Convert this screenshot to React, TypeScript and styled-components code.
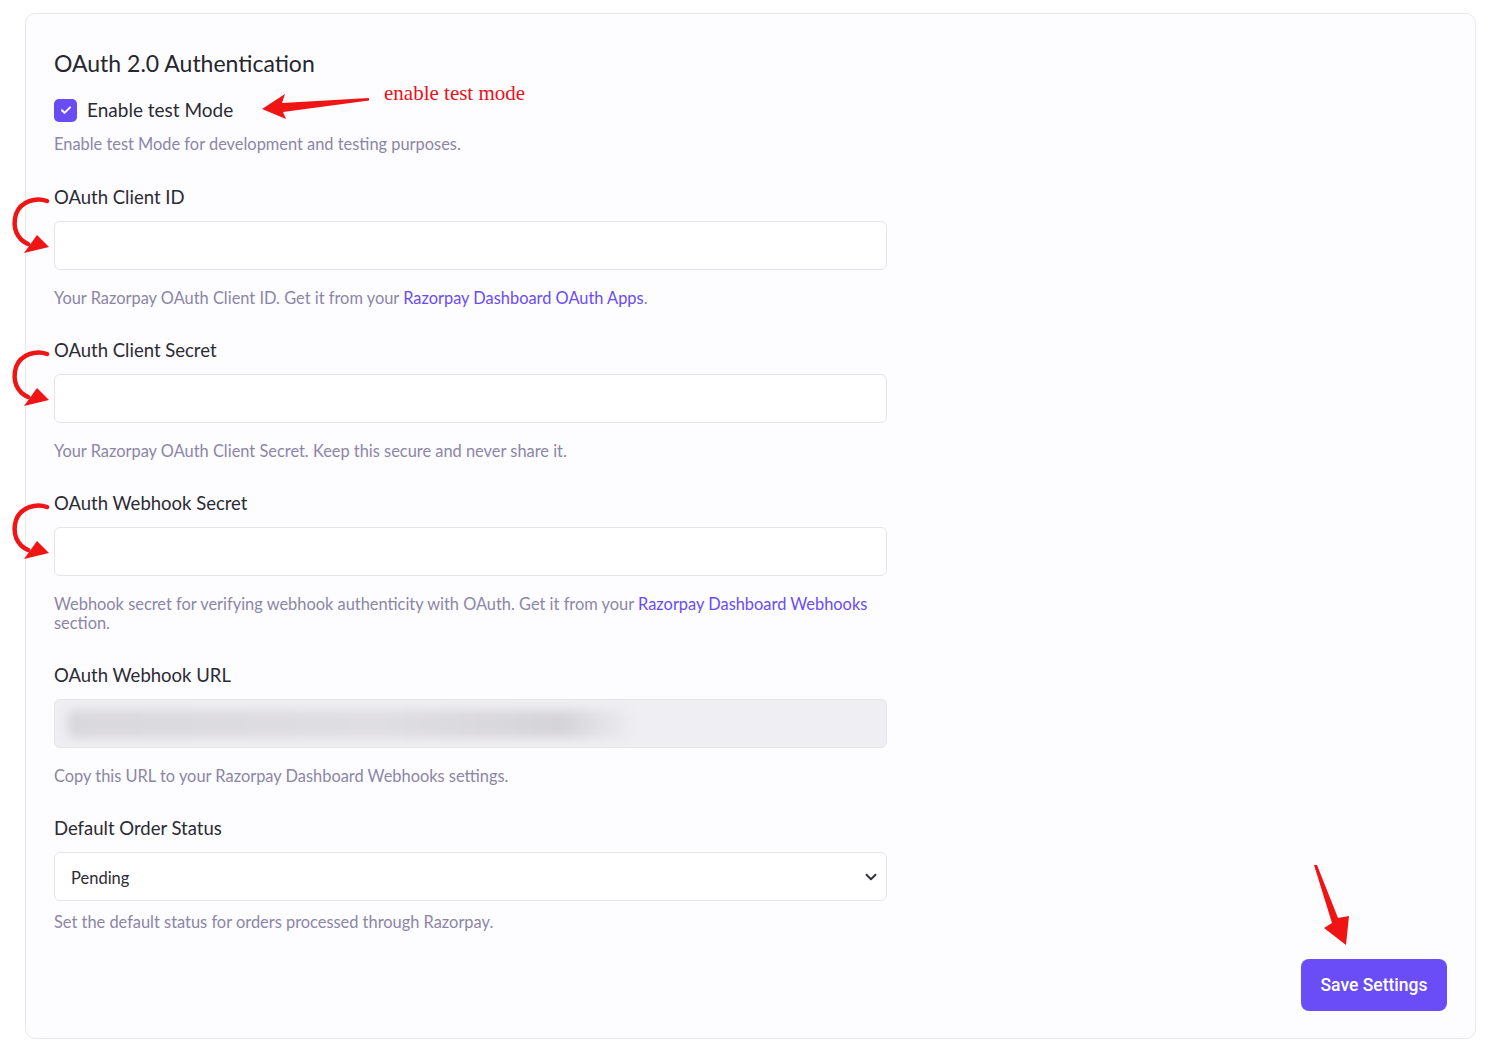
import React, { useState } from 'react';
import styled, { createGlobalStyle } from 'styled-components';

const GlobalStyle = createGlobalStyle`
  * {
    box-sizing: border-box;
  }
  body {
    margin: 0;
    background: #fff;
    font-family: Lato, 'Noto Sans', sans-serif;
    color: #2b2b33;
  }
`;

const Page = styled.div`
  position: relative;
  padding: 13px 22px 11px 25px;
`;

const Card = styled.form`
  background: #fdfcff;
  border: 1px solid #e9e8ee;
  border-radius: 10px;
  padding: 34px 28px 27px 28px;
  min-height: 1026px;
  display: flex;
  flex-direction: column;
`;

const Title = styled.h2`
  margin: 0 0 19px;
  font-size: 23px;
  font-weight: 400;
  line-height: 30px;
  color: #26262e;
`;

const CheckRow = styled.label`
  display: flex;
  align-items: center;
  gap: 10px;
  font-size: 19px;
  line-height: 26px;
  color: #2b2b33;
  cursor: pointer;
`;

const Box = styled.span<{ $on: boolean }>`
  width: 23px;
  height: 23px;
  border-radius: 5px;
  background: ${(p) => (p.$on ? '#6a4cf5' : '#fff')};
  border: ${(p) => (p.$on ? 'none' : '1px solid #c9c6d6')};
  display: flex;
  align-items: center;
  justify-content: center;
`;

const Fields = styled.div`
  width: 833px;
  display: flex;
  flex-direction: column;
`;

const Field = styled.div<{ $gap?: number }>`
  display: flex;
  flex-direction: column;
  margin-top: ${(p) => p.$gap ?? 31}px;
`;

const Label = styled.label`
  font-size: 18.5px;
  line-height: 24px;
  color: #2b2b33;
  margin-bottom: 12px;
`;

const Input = styled.input`
  height: 49px;
  width: 100%;
  border: 1px solid #e5e4ea;
  border-radius: 6px;
  background: #fff;
  padding: 0 16px;
  font: inherit;
  font-size: 16px;
  outline: none;
`;

const ReadOnly = styled.div`
  height: 49px;
  border: 1px solid #e5e4ea;
  border-radius: 6px;
  background: #efeef2;
  display: flex;
  align-items: center;
  padding: 0 12px;
  overflow: hidden;
`;

const Smudge = styled.div`
  width: 562px;
  height: 28px;
  border-radius: 8px;
  background: linear-gradient(90deg, #d9d8dc 0%, #dfdee2 55%, #d5d4d8 88%, #ecebef 100%);
  filter: blur(5px);
`;

const SelectWrap = styled.div`
  height: 49px;
  border: 1px solid #e5e4ea;
  border-radius: 6px;
  background: #fff;
  display: flex;
  align-items: center;
  justify-content: space-between;
  padding: 3px 6px 0 16px;
  font-size: 16.5px;
  color: #2b2b33;

  svg {
    margin-top: -3px;
  }
`;

const Help = styled.p<{ $top?: number }>`
  margin: ${(p) => p.$top ?? 18}px 0 0;
  font-size: 16.4px;
  line-height: 19px;
  color: #8b86a6;
`;

const Link = styled.a`
  color: #6a4cf5;
  text-decoration: none;
`;

const Footer = styled.div`
  margin-top: auto;
  display: flex;
  justify-content: flex-end;
`;

const SaveButton = styled.button`
  width: 146px;
  height: 52px;
  border: none;
  border-radius: 8px;
  background: #6a4df6;
  color: #fff;
  font-family: Roboto, 'Liberation Sans', sans-serif;
  font-size: 17.5px;
  font-weight: 500;
  cursor: pointer;
`;

/* red hand-drawn markers laid over the whole page */
const Overlay = styled.svg`
  position: absolute;
  left: 0;
  top: 0;
  pointer-events: none;
`;

const Note = styled.span`
  position: absolute;
  left: 384px;
  top: 81px;
  font-family: 'Liberation Serif', serif;
  font-size: 21px;
  color: #e8121b;
  white-space: nowrap;
`;

const RED = '#f01515';

const CurlArrow = ({ dy }: { dy: number }) => (
  <g transform={`translate(0 ${dy})`}>
    <path d="M47 201 C36 197 21 201 16 214 C12 228 17 239 28 244" fill="none" stroke={RED} strokeWidth="4.5" strokeLinecap="round" />
    <path d="M37 235 L49 247 L24 253 Z" fill={RED} />
  </g>
);

const Check = () => (
  <svg width="14" height="14" viewBox="0 0 24 24" fill="none" stroke="#fff" strokeWidth="3.4" strokeLinecap="round" strokeLinejoin="round">
    <path d="M5 12.5l4.5 4.5L19 7.5" />
  </svg>
);

const Chevron = () => (
  <svg width="18" height="18" viewBox="0 0 24 24" fill="none" stroke="#33333b" strokeWidth="2.6" strokeLinecap="round" strokeLinejoin="round">
    <path d="M6 9l6 6 6-6" />
  </svg>
);

const App = () => {
  const [testMode, setTestMode] = useState(true);

  return (
    <Page>
      <GlobalStyle />
      <Card onSubmit={(e) => e.preventDefault()}>
        <Title>OAuth 2.0 Authentication</Title>
        <CheckRow onClick={() => setTestMode(!testMode)}>
          <Box $on={testMode}>{testMode && <Check />}</Box>
          Enable test Mode
        </CheckRow>
        <Help $top={11}>Enable test Mode for development and testing purposes.</Help>

        <Fields>
          <Field $gap={32}>
            <Label>OAuth Client ID</Label>
            <Input type="text" />
            <Help>
              Your Razorpay OAuth Client ID. Get it from your <Link href="#">Razorpay Dashboard OAuth Apps</Link>.
            </Help>
          </Field>

          <Field>
            <Label>OAuth Client Secret</Label>
            <Input type="password" />
            <Help>Your Razorpay OAuth Client Secret. Keep this secure and never share it.</Help>
          </Field>

          <Field>
            <Label>OAuth Webhook Secret</Label>
            <Input type="password" />
            <Help>
              Webhook secret for verifying webhook authenticity with OAuth. Get it from your{' '}
              <Link href="#">Razorpay Dashboard Webhooks</Link> section.
            </Help>
          </Field>

          <Field>
            <Label>OAuth Webhook URL</Label>
            <ReadOnly>
              <Smudge />
            </ReadOnly>
            <Help>Copy this URL to your Razorpay Dashboard Webhooks settings.</Help>
          </Field>

          <Field>
            <Label>Default Order Status</Label>
            <SelectWrap>
              Pending
              <Chevron />
            </SelectWrap>
            <Help $top={11}>Set the default status for orders processed through Razorpay.</Help>
          </Field>
        </Fields>

        <Footer>
          <SaveButton type="submit">Save Settings</SaveButton>
        </Footer>
      </Card>

      <Overlay width="1498" height="1050" viewBox="0 0 1498 1050">
        <path d="M262 109 L285 94 L282 103 L369 98 L369 100.5 L283 112 L286 119 Z" fill={RED} />
        <CurlArrow dy={0} />
        <CurlArrow dy={153} />
        <CurlArrow dy={306} />
        <path d="M1314 865 L1317 865 L1338 918 L1349 916 L1346 945 L1324 928 L1332 923 Z" fill={RED} />
      </Overlay>
      <Note>enable test mode</Note>
    </Page>
  );
};

export default App;
